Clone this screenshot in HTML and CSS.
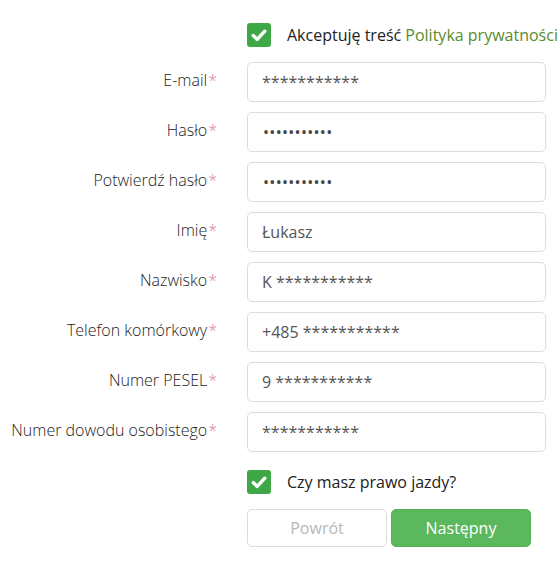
FILE: index.html
```html
<!DOCTYPE html>
<html lang="pl">
<head>
<meta charset="utf-8">
<link rel="stylesheet" href="styles.css">
</head>
<body>
<form class="form">
  <div class="row check-row top-check">
    <div></div>
    <label class="check">
      <span class="box"><svg viewBox="0 0 24 24" width="24" height="24"><path d="M6.2 12.6 L10.2 16.4 L17.8 8.2" fill="none" stroke="#fff" stroke-width="3.4" stroke-linecap="round" stroke-linejoin="round"/></svg></span>
      <span class="check-text">Akceptuję treść <a class="link">Polityka prywatności</a></span>
    </label>
  </div>
  <div class="row"><div class="label">E-mail<span class="req">*</span></div><div class="input">***********</div></div>
  <div class="row"><div class="label">Hasło<span class="req">*</span></div><div class="input pw">•••••••••••</div></div>
  <div class="row"><div class="label">Potwierdź hasło<span class="req">*</span></div><div class="input pw">•••••••••••</div></div>
  <div class="row"><div class="label">Imię<span class="req">*</span></div><div class="input">Łukasz</div></div>
  <div class="row"><div class="label">Nazwisko<span class="req">*</span></div><div class="input">K ***********</div></div>
  <div class="row"><div class="label">Telefon komórkowy<span class="req">*</span></div><div class="input">+485 ***********</div></div>
  <div class="row"><div class="label">Numer PESEL<span class="req">*</span></div><div class="input">9 ***********</div></div>
  <div class="row"><div class="label">Numer dowodu osobistego<span class="req">*</span></div><div class="input">***********</div></div>
  <div class="row check-row">
    <div></div>
    <label class="check">
      <span class="box"><svg viewBox="0 0 24 24" width="24" height="24"><path d="M6.2 12.6 L10.2 16.4 L17.8 8.2" fill="none" stroke="#fff" stroke-width="3.4" stroke-linecap="round" stroke-linejoin="round"/></svg></span>
      <span class="check-text">Czy masz prawo jazdy?</span>
    </label>
  </div>
  <div class="row buttons-row">
    <div></div>
    <div class="buttons">
      <button type="button" class="btn btn-back">Powrót</button>
      <button type="button" class="btn btn-next">Następny</button>
    </div>
  </div>
</form>
</body>
</html>
```
FILE: styles.css
```css
html, body {
  margin: 0;
  padding: 0;
  background: #fff;
}
body {
  font-family: "Open Sans", "Liberation Sans", sans-serif;
  font-size: 16px;
  color: #333;
  overflow: hidden;
}
.form {
  padding-top: 23px;
  display: flex;
  flex-direction: column;
  gap: 10px;
}
.row {
  display: grid;
  grid-template-columns: 217px 299px;
  column-gap: 30px;
  white-space: nowrap;
}
.label {
  text-align: right;
  padding-top: 7px;
  line-height: 22px;
  font-weight: 300;
  color: #222;
}
.req {
  color: #d9849a;
  margin-left: 1px;
}
.input {
  box-sizing: border-box;
  height: 40px;
  border: 1px solid #dcdcdc;
  border-radius: 5px;
  padding: 0 14px;
  line-height: 38px;
  color: #555;
  font-size: 16px;
}
.input.pw {
  padding-left: 15px;
  font-size: 16px;
  letter-spacing: 0.3px;
  color: #444;
}
.check-row {
  height: 24px;
}
.top-check {
  margin-bottom: 5px;
}
.row:nth-last-child(2) {
  margin-top: 8px;
}
.check {
  display: flex;
  align-items: center;
  gap: 16px;
}
.box {
  width: 24px;
  height: 24px;
  border-radius: 3px;
  background: #3fa846;
  display: block;
  flex: none;
}
.box svg {
  display: block;
}
.check-text {
  color: #222;
  line-height: 24px;
}
.link {
  color: #5a8c2c;
  text-decoration: none;
}
.buttons-row {
  margin-top: 5px;
}
.buttons {
  display: flex;
  gap: 4px;
}
.btn {
  box-sizing: border-box;
  width: 140px;
  height: 38px;
  border-radius: 5px;
  font-family: "Open Sans", "Liberation Sans", sans-serif;
  font-size: 16px;
  padding: 0;
}
.btn-back {
  background: #fff;
  border: 1px solid #dcdcdc;
  color: #b8b8b8;
}
.btn-next {
  background: #5cb85c;
  border: 1px solid #55b055;
  color: #fff;
}
```
